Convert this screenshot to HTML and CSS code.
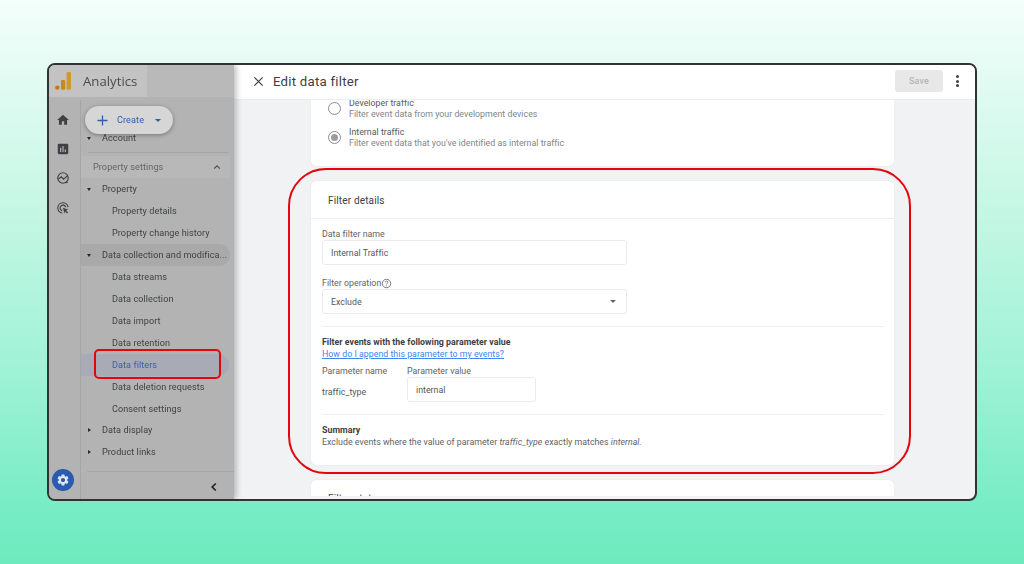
FILE: index.html
```html
<!DOCTYPE html>
<html lang="en">
<head>
<meta charset="utf-8">
<title>Edit data filter</title>
<link rel="stylesheet" href="styles.css">
</head>
<body>
<div class="window">
  <aside class="sidebar">
    <div class="brand">
      <div class="brand-block">
        <svg class="logo" viewBox="0 0 16 18"><circle cx="2.3" cy="15.6" r="2.2" fill="#c9761b"/><rect x="6" y="8" width="4.2" height="9.8" rx="1.2" fill="#c9891f"/><rect x="11.6" y="0" width="4.4" height="17.8" rx="1.3" fill="#d09a2a"/></svg>
        <span class="brand-name">Analytics</span>
      </div>
    </div>
    <div class="side-body">
      <div class="rail">
        <div class="rail-top">
          <svg class="rail-icon" viewBox="0 0 24 24"><path d="M10 20v-6h4v6h5v-8h3L12 3 2 12h3v8z"/></svg>
          <svg class="rail-icon" viewBox="0 0 24 24"><path d="M19 3H5c-1.1 0-2 .9-2 2v14c0 1.1.9 2 2 2h14c1.1 0 2-.9 2-2V5c0-1.1-.9-2-2-2zM9 17H7v-7h2v7zm4 0h-2V7h2v10zm4 0h-2v-4h2v4z"/></svg>
          <svg class="rail-icon line" viewBox="0 0 24 24"><circle cx="12" cy="12" r="9"/><path d="M4 14l5-4 4 4 7-6"/><path d="M16 20l4-1"/></svg>
          <svg class="rail-icon line" viewBox="0 0 24 24"><path d="M11 20.5A8.8 8.8 0 1 1 20.6 10.5"/><path d="M10.5 16.4A4.8 4.8 0 1 1 16.4 10.5"/><path class="solid" d="M12 11.5l9 3.4-3.8 1.5 3.4 3.4-1.6 1.6-3.4-3.4-1.3 3.6z"/></svg>
        </div>
        <div class="gear">
          <svg viewBox="0 0 24 24"><path d="M19.14 12.94c.04-.3.06-.61.06-.94 0-.32-.02-.64-.07-.94l2.03-1.58c.18-.14.23-.41.12-.61l-1.92-3.32c-.12-.22-.37-.29-.59-.22l-2.39.96c-.5-.38-1.03-.7-1.62-.94l-.36-2.54c-.04-.24-.24-.41-.48-.41h-3.84c-.24 0-.43.17-.47.41l-.36 2.54c-.59.24-1.13.57-1.62.94l-2.39-.96c-.22-.08-.47 0-.59.22L2.74 8.87c-.12.21-.08.47.12.61l2.03 1.58c-.05.3-.09.63-.09.94s.02.64.07.94l-2.03 1.58c-.18.14-.23.41-.12.61l1.92 3.32c.12.22.37.29.59.22l2.39-.96c.5.38 1.03.7 1.62.94l.36 2.54c.05.24.24.41.48.41h3.84c.24 0 .44-.17.47-.41l.36-2.54c.59-.24 1.13-.56 1.62-.94l2.39.96c.22.08.47 0 .59-.22l1.92-3.32c.12-.22.07-.47-.12-.61l-2.01-1.58zM12 15.6c-1.98 0-3.6-1.62-3.6-3.6s1.62-3.6 3.6-3.6 3.6 1.62 3.6 3.6-1.62 3.6-3.6 3.6z"/></svg>
        </div>
      </div>
      <div class="nav-col">
        <nav class="nav">
          <div class="row group"><span class="caret down"></span>Account</div>
          <div class="nav-rule"></div>
          <div class="row section"><span>Property settings</span>
            <svg class="chev" viewBox="0 0 12 12"><path d="M2.5 8L6 4.5 9.5 8"/></svg>
          </div>
          <div class="row group"><span class="caret down"></span>Property</div>
          <div class="row sub">Property details</div>
          <div class="row sub">Property change history</div>
          <div class="row group pill"><span class="caret down"></span>Data collection and modifica...</div>
          <div class="row sub">Data streams</div>
          <div class="row sub">Data collection</div>
          <div class="row sub">Data import</div>
          <div class="row sub">Data retention</div>
          <div class="row sub active">Data filters</div>
          <div class="row sub">Data deletion requests</div>
          <div class="row sub">Consent settings</div>
          <div class="row group tight"><span class="caret right"></span>Data display</div>
          <div class="row group"><span class="caret right"></span>Product links</div>
        </nav>
        <div class="nav-foot">
          <svg viewBox="0 0 12 12"><path d="M7.8 2.5L4.2 6l3.6 3.5"/></svg>
        </div>
      </div>
    </div>
    <button class="create">
      <svg class="plus" viewBox="0 0 12 12"><path d="M6 .5v11M.5 6h11"/></svg>
      <span>Create</span>
      <span class="create-caret"></span>
    </button>
    <div class="nav-mark"></div>
  </aside>

  <main class="main">
    <header class="bar">
      <svg class="close" viewBox="0 0 12 12"><path d="M1.5 1.5l9 9M10.5 1.5l-9 9"/></svg>
      <h1>Edit data filter</h1>
      <button class="save">Save</button>
      <div class="more"><i></i><i></i><i></i></div>
    </header>
    <div class="content">
      <section class="card type-card">
        <div class="radio-row">
          <span class="radio"></span>
          <div><div class="radio-title">Developer traffic</div><div class="radio-sub">Filter event data from your development devices</div></div>
        </div>
        <div class="radio-row">
          <span class="radio on"></span>
          <div><div class="radio-title">Internal traffic</div><div class="radio-sub">Filter event data that you've identified as internal traffic</div></div>
        </div>
      </section>
      <section class="card details">
        <h2 class="card-head">Filter details</h2>
        <div class="card-body">
          <label class="label">Data filter name</label>
          <div class="field wide">Internal Traffic</div>
          <label class="label second">Filter operation<svg class="help" viewBox="0 0 12 12"><circle cx="6" cy="6" r="4.6"/><path d="M4.6 4.8c0-2 2.9-1.8 2.9-.1 0 1.1-1.5 1.1-1.5 2.4"/><path d="M6 8.2v.8"/></svg></label>
          <div class="field wide select">Exclude<span class="select-caret"></span></div>
          <hr class="rule">
          <div class="strong">Filter events with the following parameter value</div>
          <a class="link" href="#">How do I append this parameter to my events?</a>
          <div class="params">
            <div class="param-name">
              <div class="label">Parameter name</div>
              <div class="param-key">traffic_type</div>
            </div>
            <div>
              <div class="label">Parameter value</div>
              <div class="field short">internal</div>
            </div>
          </div>
          <hr class="rule summary-rule">
          <div class="strong">Summary</div>
          <div class="summary">Exclude events where the value of parameter <em>traffic_type</em> exactly matches <em>internal.</em></div>
        </div>
      </section>
      <section class="card last">
        <h2 class="card-head">Filter state</h2>
      </section>
    </div>
  </main>
  <div class="mark-details"></div>
</div>
</body>
</html>
```
FILE: styles.css
```css
* { box-sizing: border-box; }
html, body { margin: 0; height: 564px; overflow: hidden; }
body {
  padding: 63px 47px;
  background: linear-gradient(180deg, #f4fefb 0%, #c8f7e6 35%, #a0f2d6 65%, #78ecc5 90%, #6eeabf 100%);
  font-family: Roboto, "Liberation Sans", sans-serif;
  color: #5f6368;
}
.window {
  position: relative;
  display: flex;
  width: 930px;
  height: 438px;
  border: 2px solid #2f3333;
  border-radius: 8px;
  overflow: hidden;
  background: #f1f2f4;
  filter: blur(.3px);
}

/* sidebar */
.sidebar {
  position: relative;
  flex: 0 0 185px;
  min-width: 0;
  display: flex;
  flex-direction: column;
  background: #b3b3b3;
  box-shadow: 2px 0 6px rgba(0,0,0,.28);
  z-index: 2;
}
.brand { height: 35px; flex: none; }
.brand-block {
  display: flex;
  align-items: center;
  height: 32px;
  background: linear-gradient(90deg, #c3c3c3 98px, #b9b9b9 98px);
}
.logo { width: 16px; height: 18px; margin: 0 0 0 6px; }
.brand-name { margin-left: 12px; font-size: 13.2px; color: #4c4c4c; font-family: "Open Sans", sans-serif; }
.side-body { flex: 1; display: flex; min-height: 0; }
.rail {
  flex: 0 0 32px;
  min-width: 0;
  display: flex;
  flex-direction: column;
  justify-content: space-between;
  align-items: center;
  border-right: 1px solid #a6a6a6;
  padding: 13px 3px 8px 0;
}
.rail-top { display: flex; flex-direction: column; gap: 15.2px; }
.rail-icon { display: block; width: 14px; height: 14px; fill: #3f4244; }
.rail-icon.line { fill: none; stroke: #3f4244; stroke-width: 2; }
.rail-icon .solid { fill: #3f4244; stroke: none; }
.gear {
  width: 22px; height: 22px;
  border-radius: 50%;
  background: #2a5bb0;
  display: flex; align-items: center; justify-content: center;
}
.gear svg { width: 14px; height: 14px; fill: #dfe6f2; }
.nav-col { flex: 1; min-width: 0; display: flex; flex-direction: column; }
.nav { flex: 1; overflow: hidden; padding-top: 27px; }
.row {
  height: 22px;
  display: flex;
  align-items: center;
  font-size: 9.1px;
  color: #3f4143;
  white-space: nowrap;
  letter-spacing: .07px;
}
.group { padding-left: 6px; }
.tight { margin-top: -1px; }
.sub { padding-left: 31px; }
.section {
  justify-content: space-between;
  padding: 0 8px 0 12px;
  color: #636567;
  background: #b8b8b8;
  margin-right: 4px;
}
.chev { width: 10px; height: 10px; fill: none; stroke: #4e5052; stroke-width: 1.4; }
.pill { background: #a9a9a9; margin-right: 4px; border-radius: 0 11px 11px 0; }
.active { color: #3a5fa8; background: #a8abb6; margin-right: 5px; border-radius: 0 11px 11px 0; }
.nav-rule { height: 1px; background: #a6a6a6; margin: 3px 5px 3px 7px; }
.caret { width: 0; height: 0; margin-right: 11px; }
.caret.down { border-left: 2.5px solid transparent; border-right: 2.5px solid transparent; border-top: 3px solid #26282a; }
.caret.right { border-top: 2.5px solid transparent; border-bottom: 2.5px solid transparent; border-left: 3px solid #26282a; margin-left: 1px; }
.nav-foot {
  flex: 0 0 28px;
  border-top: 1px solid #a6a6a6;
  margin-left: 6px;
  display: flex;
  justify-content: flex-end;
  align-items: center;
  padding: 2px 14px 0 0;
}
.nav-foot svg { width: 12px; height: 12px; fill: none; stroke: #222; stroke-width: 1.7; }
.create {
  position: absolute;
  left: 36px; top: 41px;
  width: 88px; height: 28px;
  border: 0;
  border-radius: 14px;
  background: #d6d6d6;
  box-shadow: 0 1px 4px rgba(0,0,0,.35);
  display: flex;
  align-items: center;
  font: 9.1px Roboto, sans-serif;
  letter-spacing: .1px;
  color: #2f5cad;
  padding: 0 0 0 12px;
}
.plus { width: 11px; height: 11px; fill: none; stroke: #2f5cad; stroke-width: 1.4; margin-right: 9px; }
.create-caret { width: 0; height: 0; border-left: 3px solid transparent; border-right: 3px solid transparent; border-top: 3.5px solid #2f5cad; margin-left: 11px; }
.nav-mark {
  position: absolute;
  left: 45px; top: 284px;
  width: 127px; height: 30px;
  border: 2.5px solid #e3060f;
  border-radius: 5px;
}

/* main */
.main { flex: 1; min-width: 0; display: flex; flex-direction: column; }
.bar {
  flex: 0 0 35px;
  display: flex;
  align-items: center;
  background: #fff;
  border-bottom: 1px solid #eceded;
  padding: 0 16px 2px 19px;
  position: relative;
  z-index: 1;
}
.close { width: 11px; height: 11px; fill: none; stroke: #444; stroke-width: 1.4; }
.bar h1 { margin: 0 0 0 9px; font: 400 13.2px Roboto, sans-serif; letter-spacing: .25px; color: #3c4043; flex: 1; }
.save {
  width: 48px; height: 22px;
  border: 0; border-radius: 3px;
  background: #e8e8e8; color: #b4b4b4;
  font: 500 8.8px Roboto, sans-serif;
  letter-spacing: .2px;
}
.more { width: 3px; margin-left: 13px; display: flex; flex-direction: column; gap: 1.5px; }
.more i { display: block; width: 3px; height: 3px; border-radius: 50%; background: #444; }
.content {
  flex: 1; min-height: 0;
  overflow: hidden;
  display: flex;
  flex-direction: column;
  gap: 15px;
  margin-bottom: 3px;
  padding-left: 77px;
}
.card {
  flex: none;
  width: 583px;
  background: #fff;
  border-radius: 5px;
  box-shadow: 0 0 1px rgba(60,64,67,.2);
}
.type-card { margin-top: -9px; height: 75px; padding: 3px 0 0 17px; }
.radio-row { display: flex; align-items: center; height: 29px; font-size: 8.8px; line-height: 11px; letter-spacing: .02px; }
.radio { width: 13px; height: 13px; border: 1px solid #8b8d90; border-radius: 50%; margin-right: 8px; flex: none; display: flex; align-items: center; justify-content: center; }
.radio.on::after { content: ""; width: 7px; height: 7px; border-radius: 50%; background: #9a9c9f; }
.radio-title { color: #55585b; }
.radio-sub { color: #80868b; }
.details { height: 284px; }
.card-head { margin: 0; font: 400 10px Roboto, sans-serif; letter-spacing: .15px; color: #3c4043; height: 38px; padding-left: 17px; line-height: 39px; border-bottom: 1px solid #eeeff0; }
.card-body { padding: 9px 10px 0 11px; font-size: 8.8px; letter-spacing: .02px; }
.label { display: block; line-height: 12px; color: #5f6368; font-size: 8.8px; }
.second { margin-top: 12px; display: flex; align-items: center; }
.help { width: 11px; height: 11px; fill: none; stroke: #5f6368; stroke-width: .9; }
.field {
  height: 25px;
  border: 1px solid #e8eaed;
  border-radius: 3px;
  display: flex;
  align-items: center;
  padding-left: 8px;
  color: #55585b;
}
.wide { width: 305px; }
.select { justify-content: space-between; padding-right: 10px; }
.select-caret { width: 0; height: 0; border-left: 3px solid transparent; border-right: 3px solid transparent; border-top: 3.5px solid #666; }
.rule { height: 1px; border: 0; background: #eeeff0; margin: 12px 0 9px; }
.strong { font-weight: 700; color: #3c4043; line-height: 12px; }
.link { display: block; color: #4285f4; line-height: 12px; text-decoration: underline; }
.params { display: flex; margin-top: 5px; }
.param-name { width: 85px; }
.param-key { margin-top: 9px; line-height: 12px; color: #55585b; }
.short { width: 129px; }
.summary-rule { margin: 12px 0 9px; }
.summary { line-height: 12px; color: #5f6368; }
.last { height: 40px; }
.last .card-head { line-height: 37px; }

.mark-details {
  position: absolute;
  left: 239px; top: 103px;
  width: 623px; height: 306px;
  border: 2.5px solid #e3060f;
  border-radius: 38px;
  z-index: 3;
}
```
